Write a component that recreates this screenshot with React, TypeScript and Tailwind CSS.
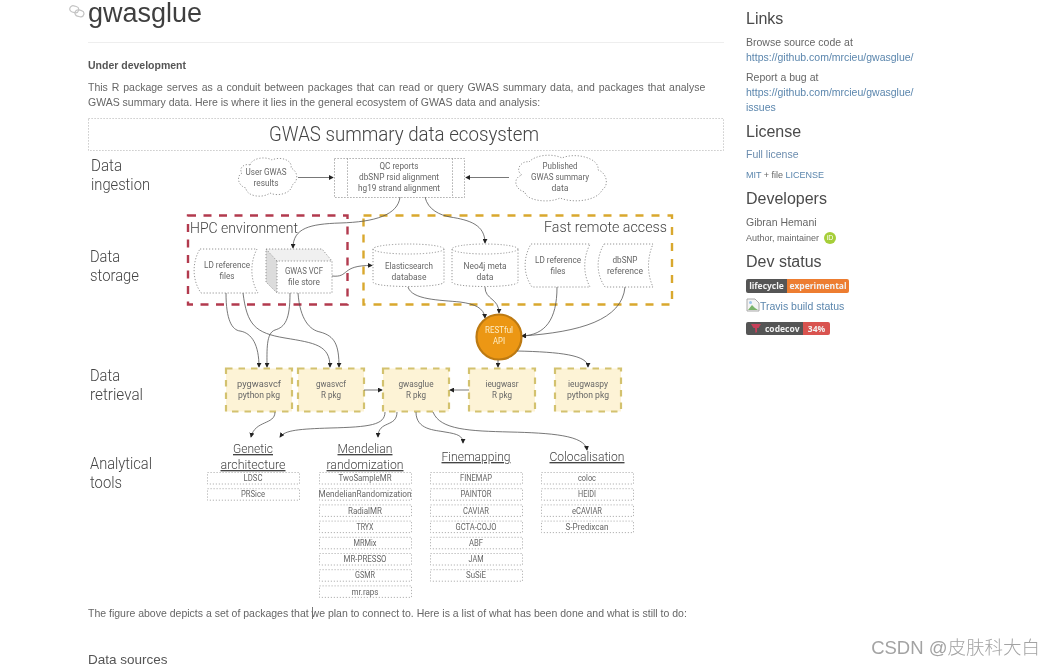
import React from "react";

type TP = { x: number; y: number; w: number; s?: number; a?: "start" | "middle"; c?: string; u?: boolean; children: string };
function T({ x, y, w, s = 8.5, a = "middle", c, u, children }: TP) {
  const big = s >= 13;
  return (
    <text x={x} y={y} fontSize={s} textAnchor={a} fill={c ?? (big ? "#444" : "#666")} fontWeight={big ? 300 : 400} textLength={w} lengthAdjust="spacingAndGlyphs" textDecoration={u ? "underline" : undefined}>
      {children}
    </text>
  );
}

const dash = { fill: "none", stroke: "#8a8a8a", strokeWidth: 0.9, strokeDasharray: "1.2 1.8" };
const arrow = { fill: "none", stroke: "#555", strokeWidth: 0.8, markerEnd: "url(#ah)" };

const tools: { x: number; top: number; items: [string, number][] }[] = [
  { x: 207, top: 472.5, items: [["LDSC", 19], ["PRSice", 24]] },
  { x: 319, top: 472.5, items: [["TwoSampleMR", 53], ["MendelianRandomization", 93], ["RadialMR", 34], ["TRYX", 17], ["MRMix", 23], ["MR-PRESSO", 43], ["GSMR", 20], ["mr.raps", 27]] },
  { x: 430, top: 472.5, items: [["FINEMAP", 32], ["PAINTOR", 31], ["CAVIAR", 26], ["GCTA-COJO", 41], ["ABF", 14], ["JAM", 15], ["SuSiE", 20]] },
  { x: 541, top: 472.5, items: [["coloc", 18], ["HEIDI", 18], ["eCAVIAR", 30], ["S-Predixcan", 43]] },
];

const pkgs: { x: number; a: [string, number]; b: [string, number] }[] = [
  { x: 226, a: ["pygwasvcf", 44], b: ["python pkg", 42] },
  { x: 298, a: ["gwasvcf", 30], b: ["R pkg", 20] },
  { x: 383, a: ["gwasglue", 35], b: ["R pkg", 20] },
  { x: 469, a: ["ieugwasr", 33], b: ["R pkg", 20] },
  { x: 555, a: ["ieugwaspy", 40], b: ["python pkg", 42] },
];

function Cylinder({ x, w, y, h }: { x: number; w: number; y: number; h: number }) {
  const ry = 5;
  return (
    <g {...dash}>
      <ellipse cx={x + w / 2} cy={y + ry} rx={w / 2} ry={ry} />
      <path d={`M${x} ${y + ry} V${y + h - ry} C${x} ${y + h + 1} ${x + w} ${y + h + 1} ${x + w} ${y + h - ry} V${y + ry}`} />
    </g>
  );
}

function Diagram() {
  return (
    <svg viewBox="88 118 636 482" className="block w-[636px] h-[482px] font-['Roboto']">
      <defs>
        <marker id="ah" viewBox="0 0 6 6" refX="5" refY="3" markerWidth="5" markerHeight="5" markerUnits="userSpaceOnUse" orient="auto">
          <path d="M0 0 L6 3 L0 6 Z" fill="#222" />
        </marker>
      </defs>

      <rect x="88.5" y="118.5" width="635" height="32" {...dash} stroke="#b5b5b5" />
      <T x={404} y={141} w={270} s={21}>GWAS summary data ecosystem</T>

      <T x={91} y={171} w={31} s={17} a="start">Data</T>
      <T x={91} y={190} w={59} s={17} a="start">ingestion</T>
      <T x={90} y={262} w={30} s={17} a="start">Data</T>
      <T x={90} y={281} w={49} s={17} a="start">storage</T>
      <T x={90} y={381} w={30} s={17} a="start">Data</T>
      <T x={90} y={400} w={53} s={17} a="start">retrieval</T>
      <T x={90} y={469} w={62} s={17} a="start">Analytical</T>
      <T x={90} y={488} w={32} s={17} a="start">tools</T>

      {/* ingestion */}
      <path d="M250 165 C252 158 265 156 272 160 C280 156 293 160 291 168 C299 172 298 182 292 185 C292 193 278 197 270 193 C262 199 246 196 246 188 C238 186 236 176 242 173 C238 168 245 163 250 165 Z" {...dash} />
      <T x={266} y={175} w={41}>User GWAS</T>
      <T x={266} y={186} w={25}>results</T>
      <path d="M298 177.5 H333" {...arrow} />
      <rect x="334.5" y="158.5" width="130" height="39" {...dash} />
      <path d="M347.5 158.5 V197.5 M452.5 158.5 V197.5" {...dash} />
      <T x={399} y={169} w={39}>QC reports</T>
      <T x={399} y={180} w={80}>dbSNP rsid alignment</T>
      <T x={399} y={191} w={82}>hg19 strand alignment</T>
      <path d="M529 162 C535 155 552 153 562 158 C575 152 600 158 598 170 C606 172 610 185 602 190 C598 200 575 204 560 198 C548 204 525 200 525 192 C515 190 512 178 522 175 C514 170 522 160 529 162 Z" {...dash} />
      <T x={560} y={169} w={35}>Published</T>
      <T x={560} y={180} w={58}>GWAS summary</T>
      <T x={560} y={191} w={17}>data</T>
      <path d="M509 177.5 H466" {...arrow} />

      {/* storage groups */}
      <rect x="188" y="215.5" width="159.5" height="89" fill="none" stroke="#b23a4e" strokeWidth="2.4" strokeDasharray="8 7.5" />
      <rect x="363.5" y="215.5" width="308.5" height="89" fill="none" stroke="#d9a82e" strokeWidth="2.4" strokeDasharray="8 8" />
      <T x={190} y={233} w={108} s={15.5} a="start">HPC environment</T>
      <T x={544} y={232} w={123} s={15.5} a="start">Fast remote access</T>

      <path d="M200 249 H257 C250 262 250 280 258 293 H201 C192 280 192 262 200 249 Z" {...dash} />
      <T x={227} y={268} w={46}>LD reference</T>
      <T x={227} y={279} w={15}>files</T>

      <path d="M266 249 H322 L332 261 H277 Z" fill="#f0f0f0" stroke="none" />
      <path d="M266 249 L277 261 V293 L266 282 Z" fill="#dcdcdc" stroke="none" />
      <path d="M266 249 H322 L332 261 V293 H277 L266 282 Z M266 249 L277 261 H332 M277 261 V293" {...dash} />
      <T x={304} y={274} w={38}>GWAS VCF</T>
      <T x={304} y={285} w={32}>file store</T>

      <Cylinder x={373} w={71} y={244} h={43} />
      <T x={409} y={269} w={48}>Elasticsearch</T>
      <T x={409} y={280} w={35}>database</T>
      <Cylinder x={452} w={66} y={244} h={43} />
      <T x={485} y={269} w={43}>Neo4j meta</T>
      <T x={485} y={280} w={17}>data</T>

      <path d="M531 244 H590 C583 258 583 274 590 287 H532 C523 274 523 258 531 244 Z" {...dash} />
      <T x={558} y={263} w={46}>LD reference</T>
      <T x={558} y={274} w={15}>files</T>
      <path d="M604 244 H653 C647 258 647 274 653 287 H605 C596 274 596 258 604 244 Z" {...dash} />
      <T x={625} y={263} w={25}>dbSNP</T>
      <T x={625} y={274} w={36}>reference</T>

      {/* packages */}
      {pkgs.map((p) => (
        <g key={p.a[0]}>
          <rect x={p.x} y={368.5} width={66} height={43} fill="#fdf3d6" stroke="#d3c26f" strokeWidth="2.2" strokeDasharray="6.5 6" />
          <T x={p.x + 33} y={387} w={p.a[1]}>{p.a[0]}</T>
          <T x={p.x + 33} y={398} w={p.b[1]}>{p.b[0]}</T>
        </g>
      ))}

      {/* connectors */}
      <path d="M400 197 C398 215 375 222 340 223 C310 224 293 228 293 248" {...arrow} />
      <path d="M425 197 C428 210 440 215 450 217 C470 220 485 225 485 243" {...arrow} />
      <path d="M332 276 C350 278 340 265 372 265.5" {...arrow} />
      <path d="M408 287 C412 300 440 300 460 302 C475 304 484 308 485 318" {...arrow} />
      <path d="M485 287 C485 300 499 298 499 313" {...arrow} />
      <path d="M557 287 C557 320 545 335 522 336" {...arrow} />
      <path d="M625 287 C622 320 580 332 522 336" {...arrow} />
      <path d="M226 293 C226 320 232 330 240 331 C252 333 259 345 259 367" {...arrow} />
      <path d="M243 293 C247 325 255 333 285 338 C315 343 330 345 330 367" {...arrow} />
      <path d="M290 293 C290 320 285 327 275 330 C266 333 267 350 267 367" {...arrow} />
      <path d="M298 293 C300 320 310 330 320 332 C335 336 339 345 339 367" {...arrow} />

      <circle cx="499" cy="337" r="22.5" fill="#ec9714" stroke="#bd7a12" strokeWidth="2.2" />
      <T x={499} y={333} w={28} c="#fdeec8">RESTful</T>
      <T x={499} y={344} w={12} c="#fdeec8">API</T>

      <path d="M498 360 V367" {...arrow} />
      <path d="M517 351 C560 352 588 355 588 367" {...arrow} />
      <path d="M364 390 H382" {...arrow} />
      <path d="M469 390 H450" {...arrow} />
      <path d="M275 412 C275 425 255 420 251 437" {...arrow} />
      <path d="M385 412 C385 425 370 427 330 428 C300 429 285 430 280 437" {...arrow} />
      <path d="M397 412 C397 428 378 420 378 437" {...arrow} />
      <path d="M416 412 C416 430 435 430 445 432 C458 434 463 436 463 443" {...arrow} />
      <path d="M433 412 C440 430 470 431 510 432 C550 433 585 435 587 450" {...arrow} />

      {/* tools */}
      <T x={253} y={453} w={40} s={13.5} u>Genetic</T>
      <T x={253} y={469} w={65} s={13.5} u>architecture</T>
      <T x={365} y={453} w={55} s={13.5} u>Mendelian</T>
      <T x={365} y={469} w={77} s={13.5} u>randomization</T>
      <T x={476} y={461} w={69} s={13.5} u>Finemapping</T>
      <T x={587} y={461} w={75} s={13.5} u>Colocalisation</T>

      {tools.map((col) =>
        col.items.map(([name, w], i) => (
          <g key={name}>
            <rect x={col.x + 0.5} y={col.top + 16.2 * i} width={92} height={11.5} {...dash} stroke="#aaa" />
            <T x={col.x + 46} y={col.top + 16.2 * i + 8.6} w={w} s={8.5}>{name}</T>
          </g>
        ))
      )}
    </svg>
  );
}

function Heading({ className, children }: { className: string; children: React.ReactNode }) {
  return <h2 className={`text-[16px] leading-[20px] text-[#4a4a4a] ${className}`}>{children}</h2>;
}

export default function App() {
  return (
    <div className="relative flex w-[1054px] h-[666px] overflow-hidden bg-white font-['Liberation_Sans',Arial,sans-serif] text-[#666] blur-[0.35px]">
      <main className="ml-[88px] w-[636px] shrink-0">
        <div className="relative h-[42.5px] border-b border-[#eee]">
          <svg viewBox="0 0 16 13" className="absolute -left-[19px] top-[5px] w-[16px] h-[13px]" fill="none" stroke="#c4c4c4" strokeWidth="1.2">
            <rect x="0.8" y="1" width="9" height="6.4" rx="3.2" transform="rotate(15 5 4)" />
            <rect x="6" y="5" width="9" height="6.4" rx="3.2" transform="rotate(15 10 8)" />
          </svg>
          <h1 className="text-[27px] leading-[26px] text-[#3f3f3f]">gwasglue</h1>
        </div>
        <p className="mt-[15px] text-[10.5px] leading-[15px] font-bold text-[#555]">Under development</p>
        <p className="mt-[7px] text-[10.5px] leading-[15px]">
          <span className="[word-spacing:1px]">This R package serves as a conduit between packages that can read or query GWAS summary data, and packages that analyse</span><br />
          GWAS summary data. Here is where it lies in the general ecosystem of GWAS data and analysis:
        </p>
        <div className="mt-[8.5px]">
          <Diagram />
        </div>
        <p className="mt-[5.5px] text-[10.5px] leading-[15px] whitespace-nowrap">
          The figure above depicts a set of packages that <span className="inline-block w-px h-[12px] -mr-px -mb-[2px] bg-[#777]" />we plan to connect to. Here is a list of what has been done and what is still to do:
        </p>
        <h2 className="mt-[33.5px] text-[13.5px] leading-[12px] text-[#555]">Data sources</h2>
      </main>

      <aside className="ml-[22px] w-[175px] pt-[9px] text-[10.5px] leading-[15px]">
        <Heading className="">Links</Heading>
        <p className="mt-[6px]">Browse source code at<br /><a className="text-[#5b86ad]">https://github.com/mrcieu/gwasglue/</a></p>
        <p className="mt-[5px]">Report a bug at<br /><a className="text-[#5b86ad]">https://github.com/mrcieu/gwasglue/<br />issues</a></p>
        <Heading className="mt-[7px]">License</Heading>
        <p className="mt-[5px] text-[#6b8cae]">Full license</p>
        <p className="mt-[7px] text-[9px] leading-[12px]"><span className="text-[#5b86ad]">MIT</span> + file <span className="text-[#5b86ad]">LICENSE</span></p>
        <Heading className="mt-[8px]">Developers</Heading>
        <p className="mt-[6px]">Gibran Hemani</p>
        <div className="mt-[2px] flex items-center h-[12px] text-[9px] leading-[12px]">
          Author, maintainer
          <span className="ml-[5px] flex items-center justify-center w-[12px] h-[12px] rounded-full bg-[#a6ce39] text-[7px] text-white">iD</span>
        </div>
        <Heading className="mt-[8px]">Dev status</Heading>
        <div className="mt-[7px] flex w-[103px] h-[13.5px] rounded-[2px] overflow-hidden text-[8.5px] leading-[13.5px] font-bold text-[#f2f2f2] font-['Open_Sans',sans-serif]">
          <span className="w-[41px] bg-[#555] text-center">lifecycle</span>
          <span className="flex-1 bg-[#ed7d31] text-center">experimental</span>
        </div>
        <div className="mt-[6.5px] flex items-center text-[#5b86ad] h-[15px]">
          <svg viewBox="0 0 14 14" className="w-[14px] h-[14px] shrink-0 -mt-[3px]">
            <path d="M1 1 H9 L13 5 V13 H1 Z" fill="#f4f4f4" stroke="#aaa" strokeWidth="1" />
            <path d="M2 12 L6 7 L9 10 L12 12 Z" fill="#7ab36a" />
            <circle cx="4.5" cy="4.5" r="1.5" fill="#9cc3ea" />
          </svg>
          Travis build status
        </div>
        <div className="mt-[7.5px] flex w-[84px] h-[13.5px] rounded-[2px] overflow-hidden text-[8.5px] leading-[13.5px] font-bold text-[#f2f2f2] font-['Open_Sans',sans-serif]">
          <span className="w-[57px] bg-[#555] flex items-center">
            <svg viewBox="0 0 12 12" className="ml-[4px] mr-[3px] w-[12px] h-[12px] shrink-0">
              <path d="M1 2 H11 L8.5 6 H7 V10 L5.5 11 L5 6 H3.5 Z" fill="#c9405a" />
            </svg>
            codecov
          </span>
          <span className="flex-1 bg-[#d9534f] text-center">34%</span>
        </div>
      </aside>

      <div className="absolute right-[14px] bottom-[7px] text-[18.5px] leading-[22px] font-light font-['Liberation_Sans','Noto_Sans_CJK_SC',sans-serif] text-[#a3a3a3] whitespace-nowrap">
        CSDN @皮肤科大白
      </div>
    </div>
  );
}
